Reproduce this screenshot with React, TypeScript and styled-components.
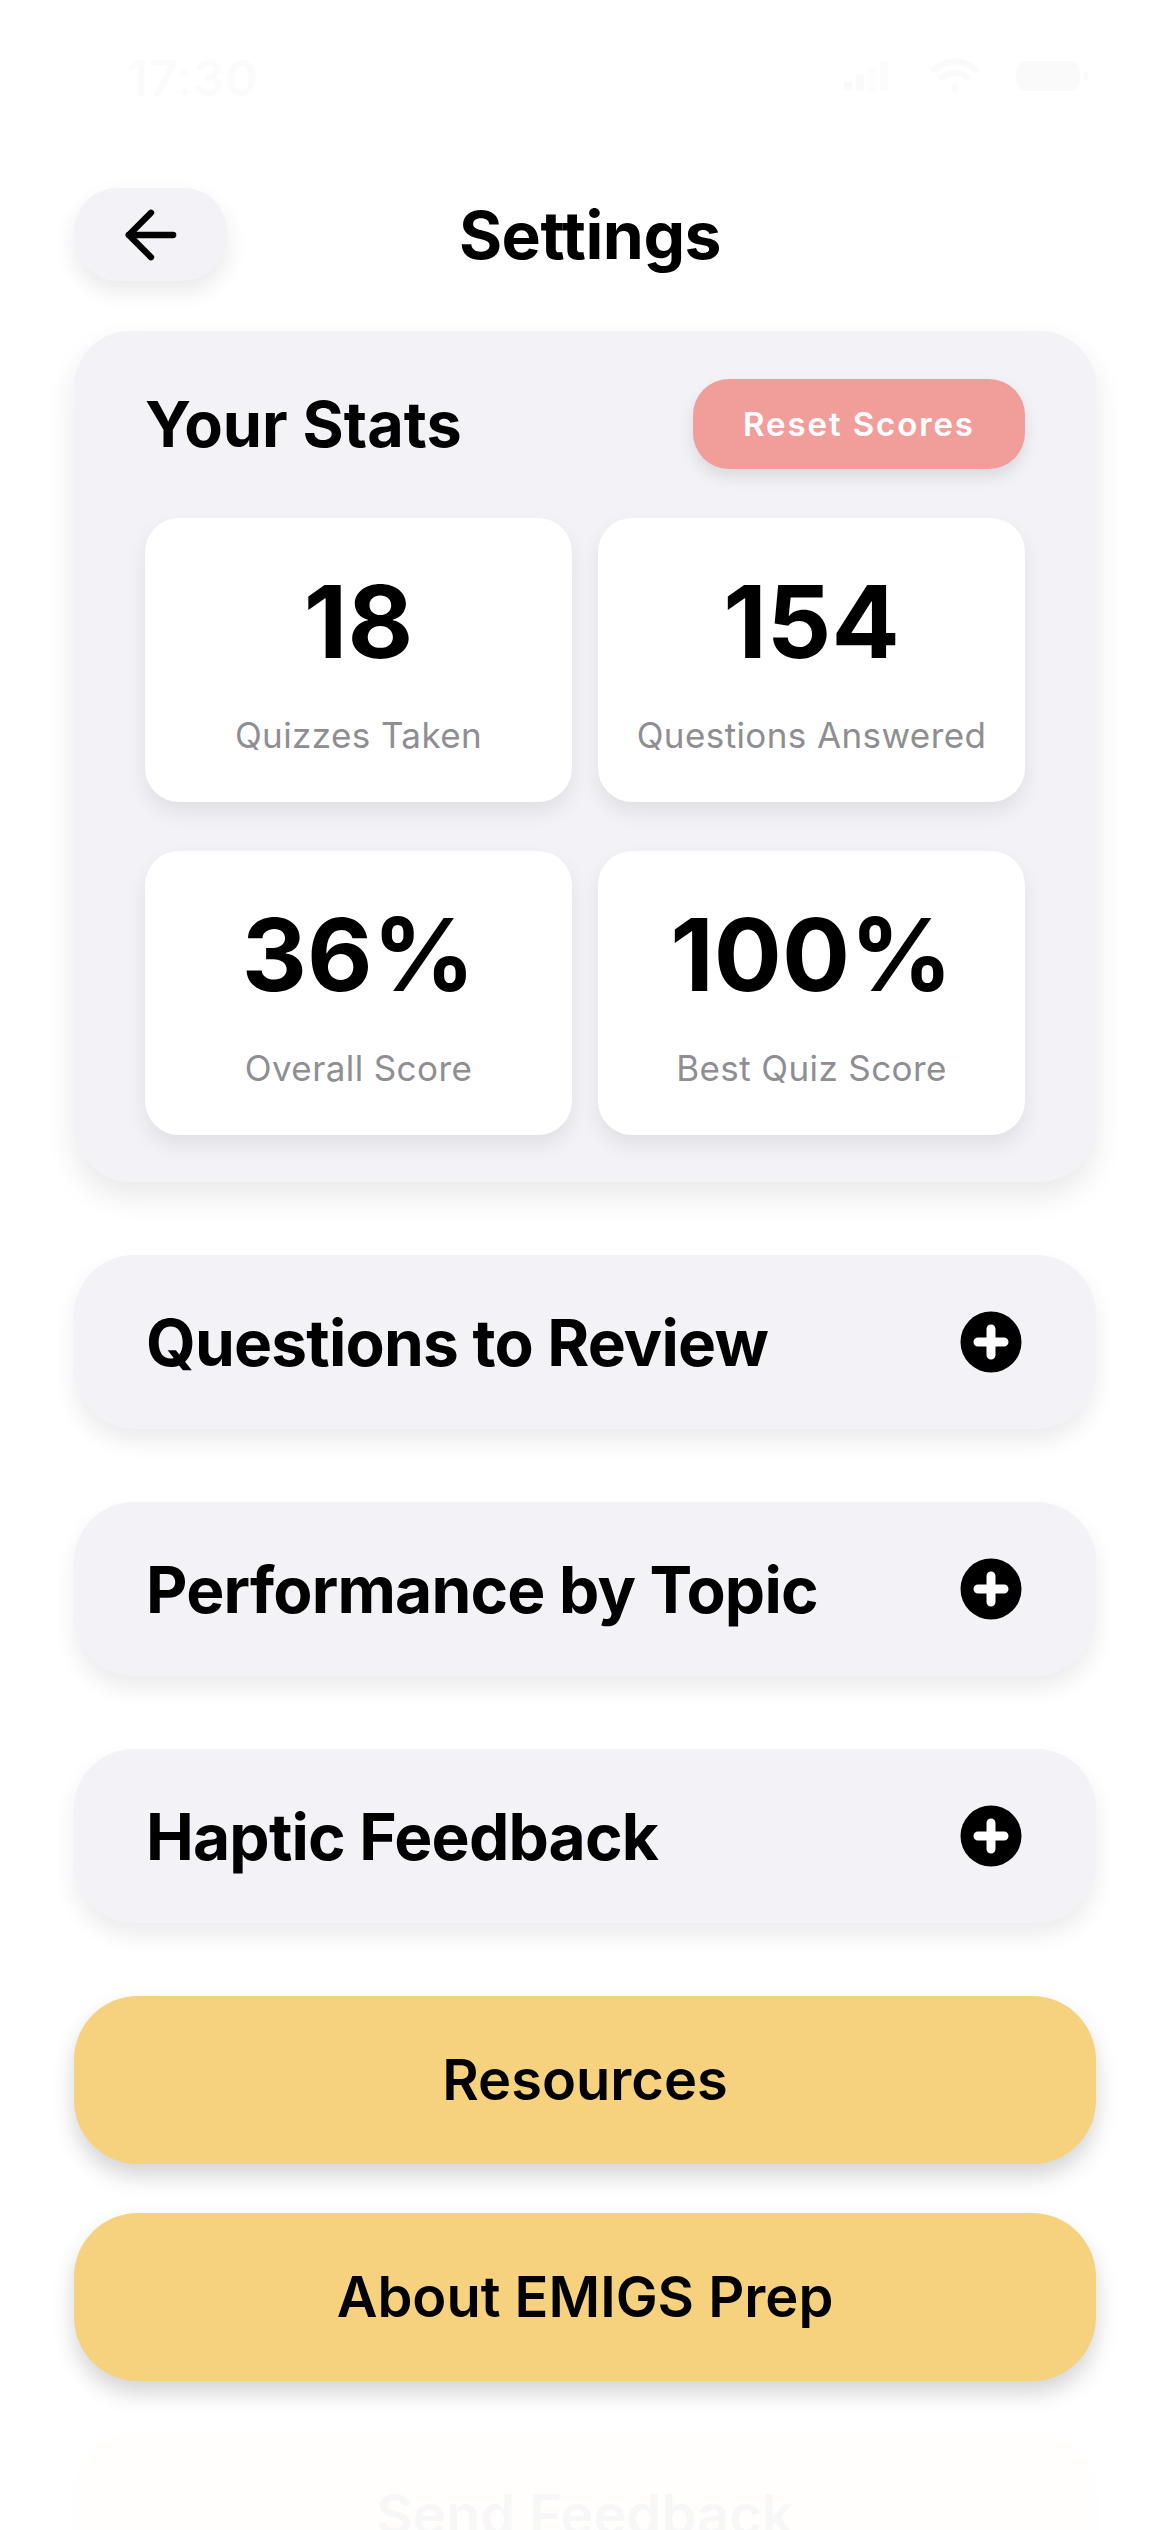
import React from "react";
import styled, { createGlobalStyle } from "styled-components";

const GlobalStyle = createGlobalStyle`
  html, body { margin: 0; padding: 0; background: #ffffff; }
  body { font-family: Inter, "Noto Sans", "Liberation Sans", sans-serif; color: #000; }
  * { box-sizing: border-box; }
`;

const Page = styled.div`
  width: 1161px;
  min-height: 2530px;
  padding: 0 65px 0 74px;
  display: flex;
  flex-direction: column;
  overflow: hidden;
`;

const StatusBar = styled.div`
  height: 188px;
  display: flex;
  align-items: flex-start;
  justify-content: space-between;
  padding: 48px 6px 0 53px;
`;

const Time = styled.span`
  font-size: 50px;
  font-weight: 600;
  color: #fbfbfb;
  letter-spacing: 0.5px;
`;

const StatusIcons = styled.div`
  display: flex;
  align-items: center;
  gap: 36px;
  padding-top: 10px;
`;

const Header = styled.header`
  display: grid;
  grid-template-columns: 153px 1fr 143px;
  align-items: center;
  height: 93px;
`;

const BackButton = styled.button`
  width: 153px;
  height: 93px;
  border: none;
  border-radius: 44px;
  background: #f2f2f7;
  box-shadow: 0 10px 22px rgba(0, 0, 0, 0.09);
  display: flex;
  align-items: center;
  justify-content: center;
  padding: 0;
  cursor: pointer;
`;

const Title = styled.h1`
  margin: 0;
  text-align: center;
  font-size: 66px;
  font-weight: 700;
  letter-spacing: -0.5px;
`;

const StatsCard = styled.section`
  margin-top: 50px;
  background: #f2f2f7;
  border-radius: 56px;
  padding: 48px 71px 47px 71px;
  box-shadow: 0 14px 30px rgba(0, 0, 0, 0.09);
`;

const CardHeader = styled.div`
  display: flex;
  align-items: center;
  justify-content: space-between;
  height: 90px;
`;

const CardTitle = styled.h2`
  margin: 0;
  font-size: 63px;
  font-weight: 700;
  letter-spacing: 0;
`;

const ResetButton = styled.button`
  width: 332px;
  height: 90px;
  border: none;
  border-radius: 36px;
  background: #f19e9b;
  color: #ffffff;
  font-family: Inter, "Noto Sans", sans-serif;
  font-size: 33px;
  font-weight: 600;
  letter-spacing: 1.9px;
  box-shadow: 0 8px 16px rgba(0, 0, 0, 0.1);
  cursor: pointer;
`;

const StatsGrid = styled.div`
  margin-top: 49px;
  display: grid;
  grid-template-columns: 1fr 1fr;
  column-gap: 26px;
  row-gap: 49px;
`;

const StatBox = styled.div`
  height: 284px;
  background: #ffffff;
  border-radius: 34px;
  box-shadow: 0 10px 20px rgba(0, 0, 0, 0.08);
  display: flex;
  flex-direction: column;
  align-items: center;
  justify-content: center;
  padding-top: 4px;
`;

const StatValue = styled.div`
  font-size: 101px;
  font-weight: 700;
  line-height: 1;
  letter-spacing: 0;
`;

const StatLabel = styled.div`
  margin-top: 46px;
  font-size: 35px;
  font-weight: 400;
  color: #8e8e93;
  letter-spacing: 0.4px;
  line-height: 1;
`;

const SectionList = styled.div`
  margin-top: 73px;
  display: flex;
  flex-direction: column;
  gap: 73px;
`;

const AccordionRow = styled.button`
  height: 174px;
  width: 100%;
  border: none;
  border-radius: 60px;
  background: #f2f2f7;
  box-shadow: 0 12px 22px rgba(0, 0, 0, 0.08);
  display: flex;
  align-items: center;
  justify-content: space-between;
  padding: 0 74px 0 72px;
  font-family: Inter, "Noto Sans", sans-serif;
  cursor: pointer;
`;

const RowTitle = styled.span`
  font-size: 64px;
  font-weight: 700;
  color: #000;
  letter-spacing: -0.8px;
`;

const ActionList = styled.div`
  margin-top: 73px;
  display: flex;
  flex-direction: column;
  gap: 49px;
`;

const YellowButton = styled.button<{ $faded?: boolean }>`
  height: 168px;
  width: 100%;
  border: none;
  border-radius: 64px;
  background: ${(p) => (p.$faded ? "#fffefc" : "#f6d17e")};
  box-shadow: ${(p) => (p.$faded ? "0 10px 20px rgba(0,0,0,0.01)" : "0 12px 22px rgba(0, 0, 0, 0.17)")};
  color: ${(p) => (p.$faded ? "#f7f7f7" : "#000")};
  font-family: Inter, "Noto Sans", sans-serif;
  font-size: 56px;
  font-weight: 600;
  letter-spacing: 0;
  cursor: pointer;
`;

const FadedWrap = styled.div`
  margin-top: 50px;
`;

const PlusIcon = () => (
  <svg width="62" height="62" viewBox="0 0 62 62" aria-hidden="true">
    <circle cx="31" cy="31" r="30.5" fill="#000" />
    <path d="M31 18v26M18 31h26" stroke="#fff" strokeWidth="9" strokeLinecap="round" />
  </svg>
);

const ArrowLeft = () => (
  <svg width="76" height="76" viewBox="0 0 24 24" fill="none" stroke="#000" strokeWidth="2" strokeLinecap="round" strokeLinejoin="round" aria-hidden="true">
    <path d="m12 19-7-7 7-7" />
    <path d="M19 12H5" />
  </svg>
);

const SignalIcon = () => (
  <svg width="50" height="30" viewBox="0 0 50 30" aria-hidden="true">
    <rect x="0" y="20" width="8" height="10" rx="2" fill="#fafafa" />
    <rect x="12" y="14" width="8" height="16" rx="2" fill="#fafafa" />
    <rect x="24" y="7" width="8" height="23" rx="2" fill="#fcfcfc" />
    <rect x="36" y="0" width="8" height="30" rx="2" fill="#fcfcfc" />
  </svg>
);

const WifiIcon = () => (
  <svg width="50" height="36" viewBox="0 0 50 36" aria-hidden="true" fill="none" stroke="#fafafa" strokeWidth="6" strokeLinecap="round">
    <path d="M4 12a30 30 0 0 1 42 0" />
    <path d="M12 20a19 19 0 0 1 26 0" />
    <circle cx="25" cy="30" r="4" fill="#fafafa" stroke="none" />
  </svg>
);

const BatteryIcon = () => (
  <svg width="74" height="30" viewBox="0 0 74 30" aria-hidden="true">
    <rect x="0" y="0" width="64" height="30" rx="9" fill="#fafafa" />
    <rect x="68" y="10" width="4" height="10" rx="2" fill="#fafafa" />
  </svg>
);

const stats = [
  { value: "18", label: "Quizzes Taken" },
  { value: "154", label: "Questions Answered" },
  { value: "36%", label: "Overall Score" },
  { value: "100%", label: "Best Quiz Score" },
];

const sections = ["Questions to Review", "Performance by Topic", "Haptic Feedback"];

export default function App() {
  return (
    <>
      <GlobalStyle />
      <Page>
        <StatusBar>
          <Time>17:30</Time>
          <StatusIcons>
            <SignalIcon />
            <WifiIcon />
            <BatteryIcon />
          </StatusIcons>
        </StatusBar>

        <Header>
          <BackButton aria-label="Back">
            <ArrowLeft />
          </BackButton>
          <Title>Settings</Title>
          <span />
        </Header>

        <StatsCard>
          <CardHeader>
            <CardTitle>Your Stats</CardTitle>
            <ResetButton>Reset Scores</ResetButton>
          </CardHeader>
          <StatsGrid>
            {stats.map((s) => (
              <StatBox key={s.label}>
                <StatValue>{s.value}</StatValue>
                <StatLabel>{s.label}</StatLabel>
              </StatBox>
            ))}
          </StatsGrid>
        </StatsCard>

        <SectionList>
          {sections.map((t) => (
            <AccordionRow key={t}>
              <RowTitle>{t}</RowTitle>
              <PlusIcon />
            </AccordionRow>
          ))}
        </SectionList>

        <ActionList>
          <YellowButton>Resources</YellowButton>
          <YellowButton>About EMIGS Prep</YellowButton>
        </ActionList>

        <FadedWrap>
          <YellowButton $faded>Send Feedback</YellowButton>
        </FadedWrap>
      </Page>
    </>
  );
}
